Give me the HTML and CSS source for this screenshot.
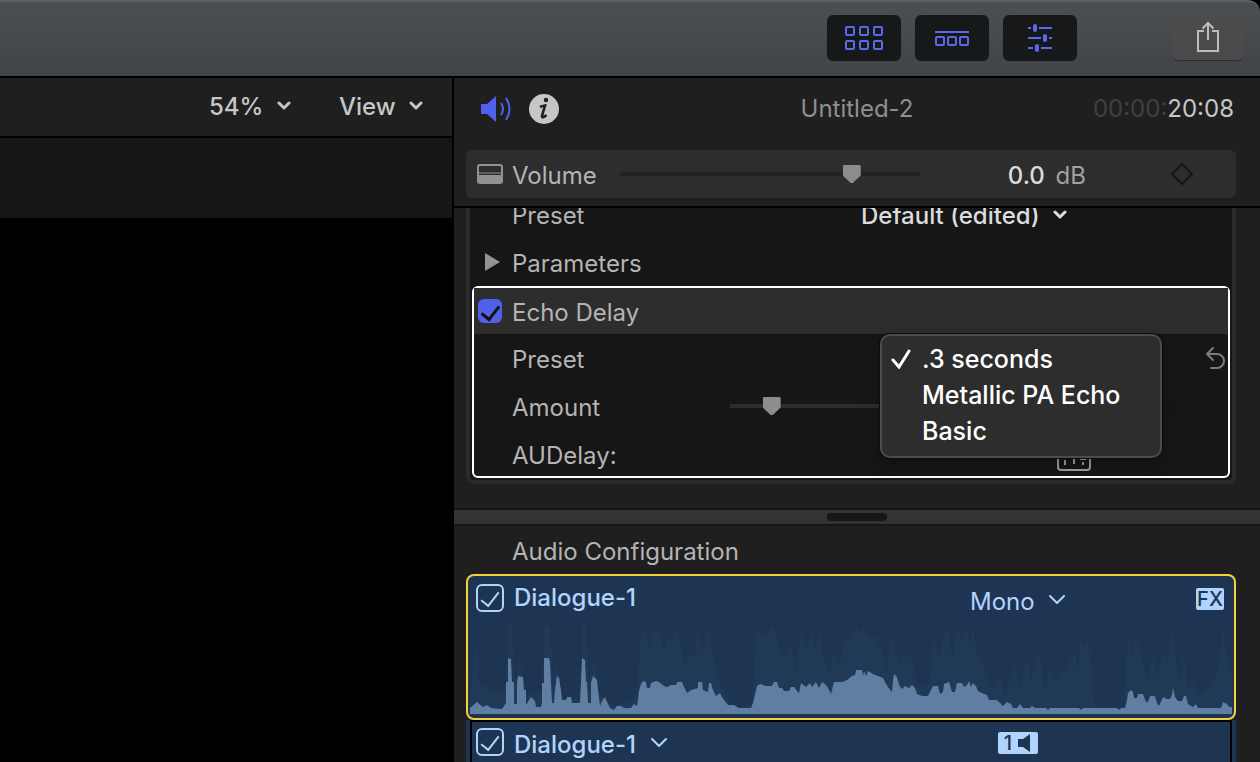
FILE: index.html
```html
<!DOCTYPE html>
<html lang="en">
<head>
    <meta charset="UTF-8">
    <meta name="viewport" content="width=device-width, initial-scale=1.0">
    <title>Untitled-2</title>
    <link rel="stylesheet" href="styles.css">
</head>
<body>

    <header class="toolbar">
        <div class="toggles">
            <button class="toggle" aria-label="Show browser">
                <svg width="40" height="24" viewBox="0 0 40 24" fill="none" stroke="#5b68e8" stroke-width="2">
                    <rect x="2" y="1" width="8" height="8" rx="1"/>
                    <rect x="16" y="1" width="8" height="8" rx="1"/>
                    <rect x="30" y="1" width="8" height="8" rx="1"/>
                    <rect x="2" y="15" width="8" height="8" rx="1"/>
                    <rect x="16" y="15" width="8" height="8" rx="1"/>
                    <rect x="30" y="15" width="8" height="8" rx="1"/>
                </svg>
            </button>
            <button class="toggle" aria-label="Show timeline">
                <svg width="36" height="16" viewBox="0 0 36 16" fill="none" stroke="#5b68e8" stroke-width="2">
                    <path d="M1 2H35"/>
                    <rect x="2" y="7" width="8" height="8" rx="1"/>
                    <rect x="14" y="7" width="8" height="8" rx="1"/>
                    <rect x="26" y="7" width="8" height="8" rx="1"/>
                </svg>
            </button>
            <button class="toggle" aria-label="Show inspector">
                <svg width="26" height="30" viewBox="0 0 26 30" fill="#5b68e8">
                    <path d="M1 5h3M12 5h13M1 15h13M22 15h3M1 25h5M14 25h11" stroke="#5b68e8" stroke-width="2"/>
                    <rect x="6" y="1" width="4" height="8" rx="2"/>
                    <rect x="16" y="11" width="4" height="8" rx="2"/>
                    <rect x="8" y="21" width="4" height="8" rx="2"/>
                </svg>
            </button>
        </div>
        <button class="share" aria-label="Share">
            <svg width="24" height="34" viewBox="0 0 24 34" fill="none" stroke="#bdbdbd" stroke-width="2">
                <path d="M8 10H2v20h20V10h-6M12 19V3M6.500 7.500L12 2l5.500 5.500"/>
            </svg>
        </button>
    </header>

    <main class="workspace">
        <section class="viewer">
            <div class="viewerBar">
                <span class="picker">
                    <select aria-label="Zoom"><option>54%</option></select>
                    <svg class="chevron" width="14" height="12" viewBox="0 0 14 12"><path d="M2 2l5 5 5-5"/></svg>
                </span>
                <span class="picker">
                    <select aria-label="View"><option>View</option></select>
                    <svg class="chevron" width="14" height="12" viewBox="0 0 14 12"><path d="M2 2l5 5 5-5"/></svg>
                </span>
            </div>
            <div class="viewerStrip"></div>
        </section>

        <section class="inspector">
            <div class="inspectorBar">
                <div class="tabs">
                    <button aria-label="Audio">
                        <svg width="32" height="28" viewBox="0 0 32 28">
                            <path d="M1 9h6l9-8v26l-9-8H1z" fill="#5060ea"/>
                            <path d="M21 8q4 6 0 12M26 3q7 11 0 22" fill="none" stroke="#5060ea" stroke-width="2"/>
                        </svg>
                    </button>
                    <button aria-label="Info">
                        <svg width="30" height="30" viewBox="0 0 30 30">
                            <circle cx="15" cy="15" r="15" fill="#c6c6c6"/>
                            <circle cx="17" cy="6" r="2.200" fill="#1f1f1f"/>
                            <path d="M11 13q2-1 5-1.500l-3 10.500q0 3 4.500-1" fill="none" stroke="#1f1f1f" stroke-width="2.600"/>
                        </svg>
                    </button>
                </div>
                <span class="clipTitle">Untitled-2</span>
                <span class="timecode"><span>00:00:</span>20:08</span>
            </div>

            <div class="volume row">
                <svg class="rowIcon" width="26" height="20" viewBox="0 0 26 20">
                    <rect x="1" y="1" width="24" height="18" rx="2" fill="none" stroke="#929292" stroke-width="2"/>
                    <path d="M1 9h24" stroke="#929292"/>
                    <path d="M1 11h24v6q0 2-2 2H3q-2 0-2-2z" fill="#929292"/>
                </svg>
                <label for="volume">Volume</label>
                <input type="range" id="volume" value="79">
                <span class="value"><b>0.0</b> dB</span>
                <button class="keyframe" aria-label="Add keyframe">
                    <svg width="24" height="24" viewBox="0 0 24 24"><path d="M12 2l10 10-10 10L2 12z"/></svg>
                </button>
            </div>

            <div class="scroller">
                <div class="effects">
                    <div class="row">
                        <label for="eqPreset">Preset</label>
                        <span class="picker bright">
                            <select id="eqPreset"><option>Default (edited)</option></select>
                            <svg class="chevron" width="14" height="12" viewBox="0 0 14 12"><path d="M2 2l5 5 5-5"/></svg>
                        </span>
                    </div>
                    <div class="row">
                        <svg class="rowIcon" width="16" height="22" viewBox="0 0 16 22"><path d="M0 0l15 9-15 9z" fill="#929292"/></svg>
                        <span>Parameters</span>
                    </div>

                    <div class="effect">
                        <div class="row effectHead">
                            <input type="checkbox" class="rowIcon" id="echo" checked>
                            <label for="echo">Echo Delay</label>
                        </div>
                        <div class="row preset">
                            <span>Preset</span>
                            <ul class="menu">
                                <li><button><svg width="20" height="20" viewBox="0 0 20 20"><path d="M2 11l6 7L18 2"/></svg>.3 seconds</button></li>
                                <li><button>Metallic PA Echo</button></li>
                                <li><button>Basic</button></li>
                            </ul>
                            <button class="reset" aria-label="Reset">
                                <svg width="20" height="24" viewBox="0 0 20 24"><path d="M8 2L2 8l6 6M2 8h10a7 7 0 0 1 0 14H6"/></svg>
                            </button>
                        </div>
                        <div class="row amount">
                            <label for="amount">Amount</label>
                            <input type="range" id="amount" value="19">
                            <button class="keyframe" aria-label="Add keyframe">
                                <svg width="24" height="24" viewBox="0 0 24 24"><path d="M12 2l10 10-10 10L2 12z"/></svg>
                            </button>
                        </div>
                        <div class="row audelay">
                            <span>AUDelay:</span>
                            <button class="editor" aria-label="Open effect editor">
                                <svg width="34" height="24" viewBox="0 0 34 24" fill="none" stroke="#a0a0a0" stroke-width="2">
                                    <rect x="1" y="1" width="32" height="22" rx="3"/>
                                    <path d="M8 13v5M17 6v11M26 15v3M23 12h6"/>
                                </svg>
                            </button>
                        </div>
                    </div>
                </div>
            </div>

            <div class="splitter"></div>

            <div class="configTitle">Audio Configuration</div>

            <div class="clip selected">
                <div class="clipHead">
                    <input type="checkbox" id="dialogue" checked>
                    <label for="dialogue">Dialogue-1</label>
                    <span class="picker">
                        <select aria-label="Channels"><option>Mono</option></select>
                        <svg class="chevron" width="18" height="16" viewBox="0 0 18 16"><path d="M2 2l7 7 7-7"/></svg>
                    </span>
                    <span class="badge">FX</span>
                </div>
                <svg class="waveform" viewBox="0 0 762 90" preserveAspectRatio="none">
                    <path class="peaks" d="M0 90L2 55 6 12 9 58 30 70 36 60 38 2 42 2 45 62 50 32 54 70 72 68 74 2 80 2 83 60 87 35 92 75 110 75 112 2 116 2 119 60 124 30 129 70 145 82 166 74 170 20 173 2 176 12 180 25 184 3 190 10 194 25 199 10 203 18 206 4 211 20 214 44 220 30 224 34 228 2 232 30 239 3 243 34 248 54 254 65 260 80 270 84 282 80 284 40 287 4 291 12 298 8 303 2 308 20 314 36 320 22 326 46 331 6 337 26 341 4 345 24 350 8 354 35 360 50 363 26 370 40 374 20 380 14 386 2 390 8 394 2 398 14 406 12 411 25 416 48 422 8 426 28 430 44 435 28 442 36 447 62 460 60 464 10 469 35 473 12 478 2 482 35 487 6 492 18 497 2 500 18 503 5 507 30 512 40 517 52 523 65 530 52 535 72 545 40 550 65 557 35 561 58 569 26 575 65 580 46 586 60 595 44 605 30 608 50 610 10 613 24 617 18 621 35 624 82 654 84 656 50 658 2 662 32 667 10 673 38 678 55 682 28 687 55 693 30 698 36 702 2 706 38 710 60 714 24 718 65 724 55 728 74 744 54 749 40 753 2 757 34 762 54V90Z"/>
                    <path class="level" d="M0 90V84L7 78 13 83 17 81 21 84 32 85 36 79V58H38V34L41 35 42 58H44V80H47V59L48 52 53 53 54 66H56V81L59 76 61 73 65 77 66 83H71L72 79V59H74V34H79L80 38 81 59 82 79H84L85 66 87 52 89 54 91 66 92 76H96L97 73H101L102 79H110L111 58 112 34 115 36 116 58H117L118 79H121V59L123 52 127 56 128 66 130 82 132 77 135 73 137 78 140 84 144 86 147 82H151L154 84H161L164 80 167 82 168 76 169 67 171 60 173 57 176 58 177 64H180L181 59 186 57 189 58 194 62 197 63 201 61H206L207 58H212L214 63 217 69 221 66 228 64V58H232L233 66 238 68 239 59H241L243 66 246 72 250 69 252 73 254 76 258 81H264L269 84H281L283 79 285 71 287 62 290 60 296 62H302L304 58H307L309 64H312L314 67H319L321 63H324L327 67 329 69 331 59 336 63 340 59 342 63 346 58 349 64 352 58 356 61 358 64 361 70 364 58H372L377 56 382 52 385 51 386 46H392L393 52 394 47 396 52 398 47 403 50 408 52 413 54 415 58 418 63 422 68 423 56 424 50 427 53 429 61 432 65 435 62 439 64 442 61 445 64 447 70 452 72H458L460 68 463 62H468L470 70 473 68 474 60 479 58 482 68H485L487 59H492L494 63 497 61 499 57 501 63 503 59 506 62 508 67 512 69 517 71 519 76H527L530 79 533 82 537 78 541 80 543 84H547L550 80 553 84H560L562 82 565 84H576L578 86 580 84H609L611 86 613 84H647L649 86 651 84H655L657 76 658 69 661 66 663 68 664 74H667L668 70H673L676 78H678L680 72H685L687 79 689 82 693 73 697 75H700L702 71 703 64 705 73 708 77H712L714 72H716L718 80 723 83 726 80 728 84H751L753 78 757 80 759 83H762V90Z"/>
                </svg>
            </div>

            <div class="clip channel">
                <div class="clipHead">
                    <input type="checkbox" id="channel" aria-label="Dialogue-1 channel" checked>
                    <span class="picker">
                        <select aria-label="Role"><option>Dialogue-1</option></select>
                        <svg class="chevron" width="18" height="16" viewBox="0 0 18 16"><path d="M2 2l7 7 7-7"/></svg>
                    </span>
                    <span class="badge">1
                        <svg width="14" height="18" viewBox="0 0 14 18"><path d="M0 5h5l7-5v18l-7-5H0z" fill="#1d3552"/></svg>
                    </span>
                </div>
            </div>
        </section>
    </main>

</body>
</html>
```

FILE: styles.css
```css
* {
    box-sizing: border-box;
}

body {
    margin: 0;
    height: 100vh;
    overflow: hidden;
    display: flex;
    flex-direction: column;
    background-color: #000;
    color: #b4b4b4;
    font-family: Inter, "Liberation Sans", sans-serif;
    font-size: 24px;
    line-height: 28px;
}

button {
    background: none;
    border: none;
    padding: 0;
    color: inherit;
    font: inherit;
}

svg {
    display: block;
}

/* toolbar */

.toolbar {
    display: flex;
    justify-content: flex-end;
    flex: none;
    gap: 95px;
    height: 78px;
    padding: 13px 16px 0;
    border-top: 2px solid #5c6065;
    border-bottom: 2px solid #000;
    border-top-right-radius: 12px;
    background: linear-gradient(#4b4f54, #404347);
}

.toggles {
    display: flex;
    gap: 14px;
}

.toggle, .share {
    display: flex;
    justify-content: center;
    align-items: center;
    width: 74px;
    height: 46px;
    border-radius: 6px;
    background-color: #16181a;
}

.share {
    width: 72px;
    background-color: #4b4b4b;
    border-bottom: 1px solid #2c2c2c;
}

.workspace {
    display: flex;
    flex: 1;
    min-height: 0;
}

/* viewer */

.viewer {
    flex: 452 1 0;
    border-right: 2px solid #000;
}

.viewerBar {
    display: flex;
    justify-content: flex-end;
    align-items: center;
    gap: 48px;
    height: 60px;
    padding-right: 29px;
    border-bottom: 2px solid #000;
    background-color: #1f1f1f;
    color: #c6c6c6;
    font-weight: 500;
}

.viewerStrip {
    height: 80px;
    background-color: #161616;
}

.picker {
    display: flex;
    align-items: center;
    gap: 13px;
}

.picker select {
    appearance: none;
    border: none;
    padding: 0;
    background: none;
    color: inherit;
    font: inherit;
}

.chevron {
    fill: none;
    stroke: currentColor;
    stroke-width: 3;
    stroke-linecap: round;
    stroke-linejoin: round;
}

/* inspector */

.inspector {
    display: flex;
    flex-direction: column;
    flex: 806 1 0;
    background-color: #1f1f1f;
}

.inspectorBar {
    display: grid;
    grid-template-columns: 1fr auto 1fr;
    align-items: center;
    flex: none;
    height: 62px;
    margin-bottom: 10px;
    padding: 0 26px;
}

.tabs {
    display: flex;
    align-items: center;
    gap: 17px;
}

.clipTitle {
    color: #8f8f8f;
}

.timecode {
    text-align: right;
    color: #c6c6c6;
}

.timecode span {
    color: #404040;
}

.row {
    display: flex;
    align-items: center;
    position: relative;
    height: 48px;
    padding-left: 42px;
}

.rowIcon {
    position: absolute;
    left: 15px;
}

.volume {
    flex: none;
    margin: 0 24px 8px 12px;
    padding: 0 42px 0 46px;
    border-radius: 6px;
    background-color: #2d2d2d;
}

.volume .rowIcon {
    left: 11px;
}

.volume label {
    width: 108px;
}

.volume label, .value, .effect label, .effect span {
    padding-top: 3px;
}

.volume input {
    width: 300px;
}

.value {
    margin-left: auto;
    margin-right: 84px;
    word-spacing: 4px;
    color: #a0a0a0;
}

.value b {
    font-weight: 500;
    color: #dcdcdc;
}

input[type="range"] {
    appearance: none;
    height: 20px;
    margin: 0;
    background: linear-gradient(#222, #222) center / 100% 4px no-repeat;
}

input[type="range"]::-webkit-slider-thumb {
    appearance: none;
    width: 18px;
    height: 18px;
    background-color: #8c8c8c;
    clip-path: polygon(6% 0, 94% 0, 100% 6%, 100% 58%, 56% 100%, 44% 100%, 0 58%, 0 6%);
}

.keyframe path {
    fill: none;
    stroke: #161616;
    stroke-width: 2;
}

/* effects list */

.scroller {
    flex: none;
    height: 302px;
    overflow: hidden;
    border-top: 2px solid #000;
}

.effects {
    margin: -16px 24px 0 12px;
    padding-bottom: 2px;
    border: 4px solid #2b2b2b;
    border-top: none;
    border-radius: 0 0 8px 8px;
    background-color: #161616;
}

.effects > .row .picker {
    margin-left: auto;
    margin-right: 165px;
}

.bright {
    color: #dcdcdc;
    font-weight: 500;
}

.effect {
    margin: -2px 2px 0;
    border: 2px solid #fff;
    border-radius: 6px;
}

.effect .row {
    padding-left: 38px;
}

.effect .effectHead {
    height: 46px;
    background-color: #2d2d2d;
}

input[type="checkbox"] {
    appearance: none;
    flex: none;
    width: 28px;
    height: 28px;
    margin: 0;
    border: 2px solid #b1d4ff;
    border-radius: 6px;
    color: #b1d4ff;
}

input[type="checkbox"]::before {
    content: "";
    display: block;
    width: 8px;
    height: 16px;
    margin: 2px auto 0;
    border: solid currentColor;
    border-width: 0 2px 2px 0;
    transform: rotate(38deg);
}

.effectHead input[type="checkbox"] {
    left: 4px;
    width: 24px;
    height: 24px;
    border: none;
    background-color: #5060ea;
    color: #111;
}

.effectHead input[type="checkbox"]::before {
    margin-top: 3px;
    height: 15px;
    border-width: 0 3px 3px 0;
}

.reset {
    margin-left: auto;
    margin-right: 3px;
}

.reset path {
    fill: none;
    stroke: #7c7c7c;
    stroke-width: 2;
    stroke-linecap: round;
}

.amount input[type="range"] {
    width: 190px;
    background-image: linear-gradient(#2d2d2d, #2d2d2d);
}

.menu {
    position: absolute;
    top: 0;
    right: 66px;
    z-index: 1;
    width: 282px;
    margin: 0;
    padding: 5px 0 7px;
    list-style: none;
    border: 2px solid #4c4c4c;
    border-radius: 10px;
    background-color: #2d2d2d;
    box-shadow: 0 0 0 1px #0c0c0c, 0 6px 16px rgba(0, 0, 0, 0.3);
    color: #fff;
    font-size: 25px;
    font-weight: 500;
}

.menu button {
    display: block;
    position: relative;
    width: 100%;
    height: 36px;
    padding-left: 40px;
    text-align: left;
}

.menu svg {
    position: absolute;
    left: 9px;
    top: 8px;
    fill: none;
    stroke: #fff;
    stroke-width: 3;
    stroke-linecap: round;
}

.amount label {
    width: 218px;
}

.amount .keyframe {
    margin-left: auto;
    margin-right: 34px;
}

.effect .audelay {
    height: 46px;
    padding-top: 2px;
}

.editor {
    align-self: flex-end;
    margin-left: auto;
    margin-right: 137px;
    margin-bottom: 5px;
}

.splitter {
    display: flex;
    justify-content: center;
    align-items: center;
    flex: none;
    height: 18px;
    border: solid #161616;
    border-width: 2px 0;
    background-color: #333;
}

.splitter::before {
    content: "";
    width: 60px;
    height: 8px;
    border-radius: 4px;
    background-color: #161616;
}

.configTitle {
    flex: none;
    height: 48px;
    padding: 12px 0 0 58px;
}

/* clips */

.clip {
    flex: none;
    margin: 0 24px 0 12px;
    background-color: #1d3552;
    color: #b1d4ff;
    font-weight: 500;
}

.clip .chevron {
    stroke-width: 2;
}

.selected {
    height: 146px;
    border: 2px solid #f2d13c;
    border-radius: 8px;
}

.clipHead {
    display: flex;
    align-items: flex-start;
    gap: 10px;
    height: 48px;
    padding: 8px 10px 0 8px;
}

.selected .picker {
    height: 36px;
    margin-left: auto;
    margin-right: 120px;
    font-weight: 400;
}

.badge {
    display: flex;
    justify-content: center;
    align-items: center;
    gap: 6px;
    min-width: 28px;
    height: 22px;
    margin-top: 4px;
    border-radius: 2px;
    background-color: #b1d4ff;
    color: #1d3552;
    font-size: 20px;
}

.waveform {
    width: 100%;
    height: 90px;
    padding: 0 2px;
}

.peaks {
    fill: #1f3957;
}

.level {
    fill: #607da2;
}

.channel {
    height: 60px;
    border: solid #1d3552;
    border-width: 0 4px;
}

.channel .clipHead {
    padding: 6px 4px 0;
    border: 2px solid #000;
    border-bottom: none;
}

.channel .picker {
    height: 34px;
}

.channel .badge {
    width: 40px;
    margin-left: auto;
    margin-right: 188px;
}
```
